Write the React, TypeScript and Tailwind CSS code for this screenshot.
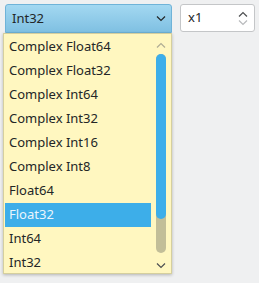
import React from "react";

const items = [
  "Complex Float64",
  "Complex Float32",
  "Complex Int64",
  "Complex Int32",
  "Complex Int16",
  "Complex Int8",
  "Float64",
  "Float32",
  "Int64",
  "Int32",
];

function Chevron({ up, className }: { up?: boolean; className?: string }) {
  return (
    <svg width="10" height="6" viewBox="0 0 10 6" className={className}>
      <path
        d={up ? "M1 5.5 L5 1.5 L9 5.5" : "M1 0.5 L5 4.5 L9 0.5"}
        fill="none"
        stroke="currentColor"
        strokeWidth="1.2"
      />
    </svg>
  );
}

export default function App() {
  return (
    <div
      className="w-[259px] h-[283px] bg-[#eff0f1] relative overflow-hidden text-[13px] text-[#232627]"
      style={{ fontFamily: '"Noto Sans", sans-serif' }}
    >
      <div className="flex items-start gap-[8px] pl-[5px] pt-[4px]">
        <div className="w-[167px] h-[29px] rounded-t-[3px] border border-[#6fb3d8] bg-gradient-to-b from-[#a3d8f1] to-[#7fc0e2] flex items-center justify-between pl-[6px] pr-[5px]">
          <span>Int32</span>
          <Chevron className="text-[#232627]" />
        </div>
        <div className="w-[75px] h-[28px] rounded-[3px] border border-[#c4c6c8] bg-white flex items-center justify-between pl-[7px] pr-[6px]">
          <span>x1</span>
          <div className="flex flex-col items-center gap-[3px]">
            <Chevron up className="text-[#4d4f51]" />
            <Chevron className="text-[#b8babc]" />
          </div>
        </div>
      </div>
      <div className="absolute left-[3px] top-[33px] w-[169px] h-[241px] bg-[#fff7c0] border border-[#d5cf9e] shadow-[0_1px_3px_rgba(0,0,0,0.25)] flex">
        <div className="flex-1 flex flex-col pt-[1px] pl-[1px]">
          {items.map((it) => (
            <div
              key={it}
              className={
                "h-[24px] shrink-0 flex items-center pl-[4px] " +
                (it === "Float32" ? "bg-[#3daee9] text-[#eaf5fc]" : "")
              }
            >
              {it}
            </div>
          ))}
        </div>
        <div className="w-[20px] flex flex-col items-center pt-[8px]">
          <Chevron up className="text-[#b0ad94]" />
          <div className="mt-[6px] w-[10px] h-[199px] rounded-full bg-[#c2be98] flex flex-col">
            <div className="h-[165px] rounded-full bg-[#3daee9]" />
          </div>
          <Chevron className="mt-[10px] text-[#4d4f51]" />
        </div>
      </div>
    </div>
  );
}
